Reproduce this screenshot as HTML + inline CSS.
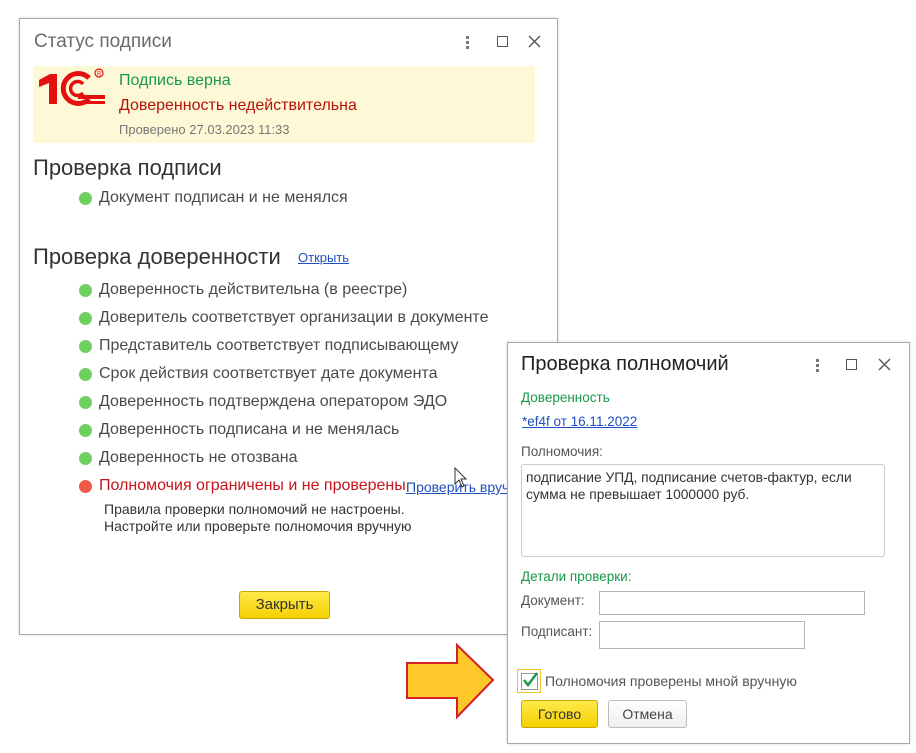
<!DOCTYPE html>
<html><head><meta charset="utf-8"><style>
body{margin:0;width:916px;height:753px;background:#fff;position:relative;overflow:hidden;font-family:"Liberation Sans",Arial,sans-serif;color:#4a4a4a}
.a{position:absolute;white-space:nowrap}
.win{position:absolute;background:#fff;border:1px solid #a8a8a8;box-shadow:0 0 3px rgba(0,0,0,.15)}
.dot{position:absolute;width:13px;height:13px;border-radius:50%;background:#6fcf5f}
.li{font-size:16px;color:#4a4a4a}
.lk{color:#1f4fbf;text-decoration:underline}
.btn{position:absolute;border:1px solid #c8a800;border-radius:3px;background:linear-gradient(#ffe94a,#f5d000);font-size:15px;color:#333;text-align:center}
.inp{position:absolute;border:1px solid #b5b5b5;background:#fff}
</style></head><body>

<div class="win" style="left:19px;top:18px;width:537px;height:615px"></div>
<div class="a" style="left:34px;top:31px;font-size:19px;color:#6b6b6b">Статус подписи</div>
<div class="a" style="left:466px;top:36px;width:3px">
 <div style="width:3px;height:3px;background:#777;margin-bottom:2px"></div><div style="width:3px;height:3px;background:#777;margin-bottom:2px"></div><div style="width:3px;height:3px;background:#777"></div></div>
<div class="a" style="left:497px;top:36px;width:9px;height:9px;border:1.5px solid #555"></div>
<svg class="a" style="left:528px;top:35px" width="13" height="13"><path d="M1 1L12 12M12 1L1 12" stroke="#555" stroke-width="1.4"/></svg>

<div class="a" style="left:33px;top:66px;width:502px;height:77px;background:#fdf9d6"></div>
<svg class="a" style="left:38px;top:66px" width="70" height="42" viewBox="0 0 70 42">
 <path d="M1 14L12 8H19V38H11V17L1 21Z" fill="#e4100f"/>
 <path d="M51 33A15 15 0 1 1 51 12" fill="none" stroke="#e4100f" stroke-width="5"/>
 <path d="M45 27A7 7 0 1 1 45 18" fill="none" stroke="#e4100f" stroke-width="3.5"/>
 <rect x="40" y="29" width="27" height="4" fill="#e4100f"/><rect x="43" y="35" width="24" height="3" fill="#e4100f"/>
 <circle cx="61" cy="7" r="4" fill="none" stroke="#e4100f" stroke-width="1.2"/><text x="59" y="9.5" font-size="6" fill="#e4100f" font-family="Liberation Sans">R</text>
</svg>
<div class="a" style="left:119px;top:72px;font-size:16px;color:#17994a">Подпись верна</div>
<div class="a" style="left:119px;top:97px;font-size:16px;color:#b5120f">Доверенность недействительна</div>
<div class="a" style="left:119px;top:122px;font-size:13px;color:#777">Проверено 27.03.2023 11:33</div>

<div class="a" style="left:33px;top:155px;font-size:22px;color:#333">Проверка подписи</div>
<div class="dot" style="left:79px;top:192px"></div><div class="a li" style="left:99px;top:189px">Документ подписан и не менялся</div>

<div class="a" style="left:33px;top:244px;font-size:22px;color:#333">Проверка доверенности</div>
<div class="a lk" style="left:298px;top:250px;font-size:13px">Открыть</div>

<div class="dot" style="left:79px;top:284px"></div><div class="a li" style="left:99px;top:281px">Доверенность действительна (в реестре)</div>
<div class="dot" style="left:79px;top:312px"></div><div class="a li" style="left:99px;top:309px">Доверитель соответствует организации в документе</div>
<div class="dot" style="left:79px;top:340px"></div><div class="a li" style="left:99px;top:337px">Представитель соответствует подписывающему</div>
<div class="dot" style="left:79px;top:368px"></div><div class="a li" style="left:99px;top:365px">Срок действия соответствует дате документа</div>
<div class="dot" style="left:79px;top:396px"></div><div class="a li" style="left:99px;top:393px">Доверенность подтверждена оператором ЭДО</div>
<div class="dot" style="left:79px;top:424px"></div><div class="a li" style="left:99px;top:421px">Доверенность подписана и не менялась</div>
<div class="dot" style="left:79px;top:452px"></div><div class="a li" style="left:99px;top:449px">Доверенность не отозвана</div>
<div class="dot" style="left:79px;top:480px;background:#ee5a4a"></div><div class="a li" style="left:99px;top:477px;color:#c8141b">Полномочия ограничены и не проверены</div>
<div class="a lk" style="left:406px;top:479px;font-size:14px;width:101px;overflow:hidden">Проверить вручную</div>
<div class="a" style="left:104px;top:501px;font-size:14px;color:#333;line-height:17px">Правила проверки полномочий не настроены.<br>Настройте или проверьте полномочия вручную</div>
<svg class="a" style="left:454px;top:467px" width="14" height="22"><path d="M1 1V17L5 13L8 20L10 19L7 12H12Z" fill="#fff" stroke="#333" stroke-width="1"/></svg>

<div class="btn" style="left:239px;top:591px;width:89px;height:26px;line-height:26px">Закрыть</div>

<!-- arrow -->
<svg class="a" style="left:400px;top:640px" width="100" height="82"><path d="M7 23H57V5L93 40L57 77V58H7Z" fill="#fcc82a" stroke="#d0202a" stroke-width="2"/></svg>

<div class="win" style="left:507px;top:342px;width:401px;height:400px"></div>
<div class="a" style="left:521px;top:353px;font-size:20px;color:#222">Проверка полномочий</div>
<div class="a" style="left:816px;top:359px;width:3px">
 <div style="width:3px;height:3px;background:#777;margin-bottom:2px"></div><div style="width:3px;height:3px;background:#777;margin-bottom:2px"></div><div style="width:3px;height:3px;background:#777"></div></div>
<div class="a" style="left:846px;top:359px;width:9px;height:9px;border:1.5px solid #555"></div>
<svg class="a" style="left:878px;top:358px" width="13" height="13"><path d="M1 1L12 12M12 1L1 12" stroke="#555" stroke-width="1.4"/></svg>
<div class="a" style="left:521px;top:390px;font-size:13.5px;color:#17994a">Доверенность</div>
<div class="a lk" style="left:522px;top:414px;font-size:13.5px">*ef4f от 16.11.2022</div>
<div class="a" style="left:521px;top:444px;font-size:13.5px;color:#555">Полномочия:</div>
<div class="inp" style="left:521px;top:464px;width:362px;height:91px;border-radius:3px;border-color:#ccc"></div>
<div class="a" style="left:526px;top:469px;font-size:13.8px;color:#333;line-height:17px">подписание УПД, подписание счетов-фактур, если<br>сумма не превышает 1000000 руб.</div>
<div class="a" style="left:521px;top:569px;font-size:13.5px;color:#17994a">Детали проверки:</div>
<div class="a" style="left:521px;top:593px;font-size:13.5px;color:#555">Документ:</div>
<div class="inp" style="left:599px;top:591px;width:264px;height:22px"></div>
<div class="a" style="left:521px;top:624px;font-size:13.5px;color:#555">Подписант:</div>
<div class="inp" style="left:599px;top:621px;width:204px;height:26px"></div>
<div class="a" style="left:517px;top:669px;width:22px;height:22px;border:1px solid #f0c030"></div>
<div class="a" style="left:521px;top:673px;width:15px;height:15px;border:1px solid #999;background:#fff"></div>
<svg class="a" style="left:521px;top:670px" width="18" height="18"><path d="M3 10L7 15L16 3" fill="none" stroke="#1a9a4a" stroke-width="2.5"/></svg>
<div class="a" style="left:545px;top:673px;font-size:14px;color:#555">Полномочия проверены мной вручную</div>
<div class="btn" style="left:521px;top:700px;width:75px;height:26px;line-height:26px;font-size:14px">Готово</div>
<div class="a" style="left:608px;top:700px;width:77px;height:26px;line-height:26px;border:1px solid #bbb;border-radius:3px;background:linear-gradient(#fff,#eee);font-size:14px;color:#444;text-align:center">Отмена</div>
</body></html>
